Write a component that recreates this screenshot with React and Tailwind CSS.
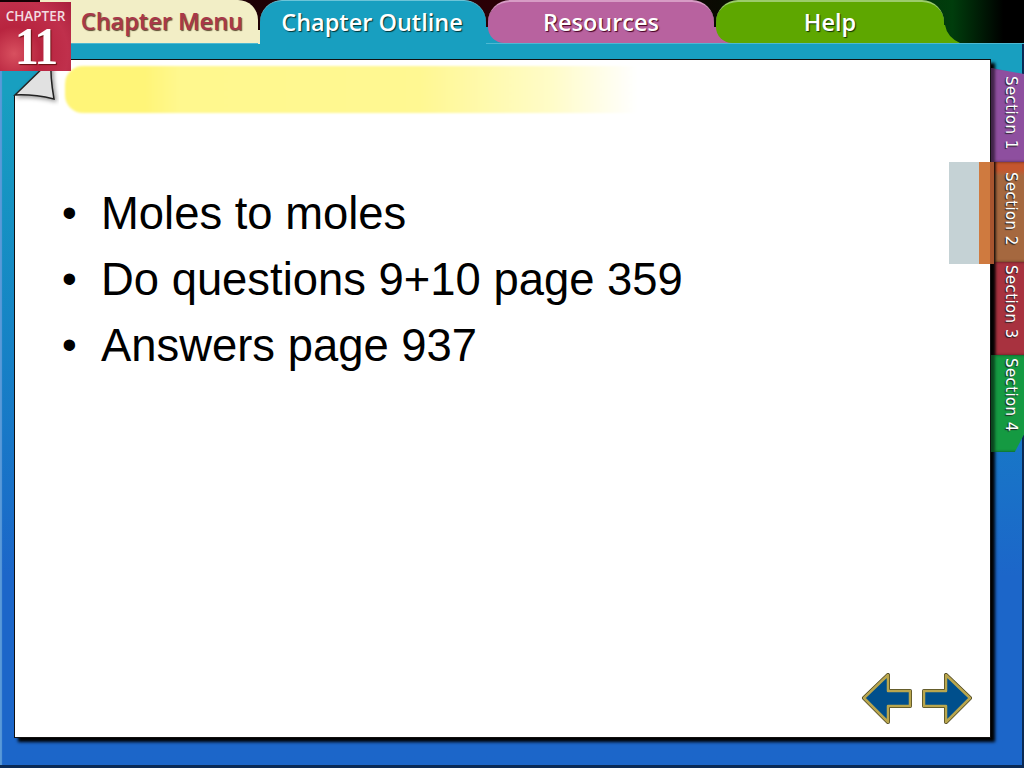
import React from 'react'

const tabFont = "font-['Open_Sans','Noto_Sans',sans-serif] font-semibold text-[23.5px] leading-none"

function Arrow({ flip }) {
  const points = '3,25 27,2 27,18 49,18 49,33 27,33 27,49'
  return (
    <svg width="52" height="52" viewBox="0 0 52 52" className={flip ? '-scale-x-100' : ''}>
      <polygon points={points} fill="#004f8c" stroke="#4a4420" strokeWidth="4" strokeLinejoin="round" />
      <polygon points={points} fill="#004f8c" stroke="#b9a64e" strokeWidth="2.5" strokeLinejoin="round" />
    </svg>
  )
}

function SectionTab({ label, className }) {
  return (
    <div className={`w-[33px] flex justify-center pl-[6px] shadow-[inset_4px_0_3px_rgba(0,0,0,0.55)] ${className}`}>
      <span className="[writing-mode:vertical-rl] font-['DejaVu_Sans',sans-serif] text-[15px] leading-none tracking-[0.4px] text-white [text-shadow:1px_1px_1px_#222]">
        {label}
      </span>
    </div>
  )
}

function Bullet({ children }) {
  return (
    <li className="flex items-center">
      <span className="w-[40px] pl-[1px] text-[42px] leading-none -translate-y-[1px]">•</span>
      {children}
    </li>
  )
}

export default function App() {
  return (
    <div className="relative w-[1024px] h-[768px] overflow-hidden bg-gradient-to-b from-[#189fc0] from-[12%] to-[#1c66c9] to-[75%]">
      {/* frame edge */}
      <div className="absolute inset-0 shadow-[inset_-2px_-3px_0_#0a2a55,inset_2px_0_1px_#5a9ad8]" />

      {/* top tab strip */}
      <div className="relative h-[44px] flex items-stretch bg-[linear-gradient(90deg,#120003_0%,#2a0006_48%,#0a0a02_70%,#003d0c_93%,#000_98%)] border-b border-b-[#4db8d2]">
        <div className={`ml-[40px] w-[218px] flex items-center justify-end pr-[15px] rounded-tr-[20px] bg-[#f2eec6] text-[#a8384a] [text-shadow:1px_1px_1px_#5a4a30] ${tabFont}`}>
          Chapter Menu
        </div>
        <div className="pl-[2px] -mb-px bg-[linear-gradient(0deg,#f2eec6_14px,transparent_14px)]">
          <div className={`h-full w-[226px] flex items-center justify-center pr-[2px] rounded-t-[22px] border-t border-t-[#6cc4d8] bg-[#189fc0] text-white [text-shadow:1px_1px_1px_#033] ${tabFont}`}>
            Chapter Outline
          </div>
        </div>
        <div className="pl-[2px] bg-[linear-gradient(0deg,#189fc0_16px,transparent_16px)]">
          <div className={`h-full w-[226px] flex items-center justify-center rounded-t-[22px] rounded-bl-[16px] border-t-2 border-t-[#d79cc5] bg-[#b8629f] text-white [text-shadow:1px_1px_1px_#402] ${tabFont}`}>
            Resources
          </div>
        </div>
        <div className="pl-[2px] bg-[linear-gradient(0deg,#b8629f_16px,transparent_16px)]">
          <div className={`h-full w-[228px] flex items-center justify-center rounded-t-[22px] rounded-bl-[16px] border-t-2 border-t-[#9ccb6c] bg-[#5ea700] text-white [text-shadow:1px_1px_1px_#130] ${tabFont}`}>
            Help
          </div>
        </div>
        <svg className="absolute left-[935px] top-[25px]" width="26" height="18" viewBox="0 0 26 18">
          <path d="M0,0 L10,0 Q12,12 25,18 L0,18 Z" fill="#5ea700" />
        </svg>
      </div>

      {/* slide and section tabs */}
      <div className="relative flex items-start">
        <div className="relative mt-[15px] ml-[14px] w-[977px] h-[679px] bg-white border border-[#111] shadow-[4px_4px_3px_#000] pt-[121px] pl-[46px]">
          <ul className="font-['Liberation_Sans',Arial,sans-serif] text-[45.4px] leading-[66px] text-black">
            <Bullet>Moles to moles</Bullet>
            <Bullet>Do questions 9+10 page 359</Bullet>
            <Bullet>Answers page 937</Bullet>
          </ul>
          <div className="absolute left-[50px] top-[6px] w-[572px] h-[47px] rounded-l-[18px] blur-[1px] bg-[linear-gradient(90deg,#fff578_0%,#fff578_14%,#fff88e_20%,#fff892_62%,#fffcc8_85%,#ffffff_100%)]" />
          <div className="absolute left-[846px] top-[613px] flex gap-[8px]">
            <Arrow />
            <Arrow flip />
          </div>
        </div>
        <div className="mt-[24px] flex flex-col">
          <SectionTab label="Section 1" className="h-[94px] pt-[8px] bg-[#8e4f9f] [clip-path:polygon(0_0,100%_6px,100%_100%,0_100%)]" />
          <SectionTab label="Section 2" className="h-[100px] pt-[10px] bg-gradient-to-b from-[#c5562e] from-[8%] to-[#a5683f] to-[14%]" />
          <SectionTab label="Section 3" className="h-[93px] pt-[3px] bg-[#a8323f]" />
          <SectionTab label="Section 4" className="h-[97px] pt-[3px] bg-[#159a42] [clip-path:polygon(0_0,100%_0,100%_82%,72%_100%,0_100%)]" />
        </div>
      </div>

      {/* current section marker */}
      <div className="absolute left-[949px] top-[162px] flex h-[102px]">
        <div className="w-[30px] bg-[#c5d2d5]" />
        <div className="w-[11px] bg-[#cf7a3f]" />
        <div className="w-[4px] bg-[#a8552f]" />
      </div>

      {/* page corner fold */}
      <svg className="absolute left-[13px] top-[58px]" width="46" height="48" viewBox="0 0 46 48">
        <polygon points="0,0 39,0 1,38 0,38" fill="#189fc0" />
        <path d="M2,37 L38,2 Q37,18 41,41 Q20,36 2,37 Z" fill="#e1e1e1" stroke="#222" strokeWidth="1.5" className="drop-shadow-[2px_2px_2px_rgba(0,0,0,0.4)]" />
      </svg>

      {/* chapter badge */}
      <div className="absolute left-0 top-[2px] w-[71px] h-[69px] flex flex-col items-center pt-[8px] bg-[radial-gradient(circle_at_20%_75%,#d8505f_0%,#b8243f_35%,#c0304c_70%,#a81f3c_100%)]">
        <span className="font-['Open_Sans',sans-serif] font-semibold text-[13.5px] leading-none text-[#f2dde0]">CHAPTER</span>
        <span className="font-['Liberation_Serif',serif] font-bold text-[48px] leading-[44px] tracking-[-2px] text-white [text-shadow:1px_1px_1px_#611] scale-y-[1.12]">11</span>
      </div>
    </div>
  )
}
